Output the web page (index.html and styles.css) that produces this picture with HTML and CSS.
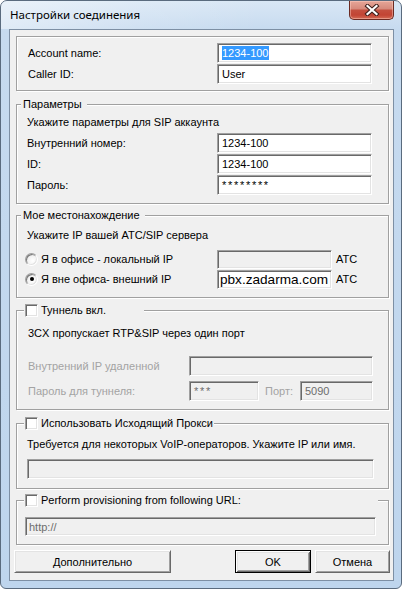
FILE: index.html
```html
<!DOCTYPE html>
<html lang="ru">
<head>
<meta charset="utf-8">
<title>Настройки соединения</title>
<link rel="stylesheet" href="styles.css">
</head>
<body>
<div class="window">
  <div class="titlebar">
    <span class="title">Настройки соединения</span>
    <div class="close">
      <svg width="16" height="12" viewBox="0 0 16 12">
        <path d="M3.5 2 L12.5 10 M12.5 2 L3.5 10" stroke="#3d1f1b" stroke-width="4.2" stroke-linecap="square" fill="none"/>
        <path d="M3.5 2 L12.5 10 M12.5 2 L3.5 10" stroke="#ffffff" stroke-width="2.2" stroke-linecap="square" fill="none"/>
      </svg>
    </div>
  </div>
  <div class="client">
    <div class="group g1">
      <div class="rows">
        <div class="row"><span class="lbl">Account name:</span><span class="field"><span class="sel">1234-100</span></span></div>
        <div class="row"><span class="lbl">Caller ID:</span><span class="field">User</span></div>
      </div>
    </div>

    <div class="group g2">
      <div class="legend text-legend">Параметры</div>
      <div class="desc">Укажите параметры для SIP аккаунта</div>
      <div class="rows">
        <div class="row r10"><span class="lbl l10">Внутренний номер:</span><span class="field">1234-100</span></div>
        <div class="row r10"><span class="lbl l10">ID:</span><span class="field">1234-100</span></div>
        <div class="row r10"><span class="lbl l10">Пароль:</span><span class="field pwd">********</span></div>
      </div>
    </div>

    <div class="group g3">
      <div class="legend text-legend">Мое местонахождение</div>
      <div class="desc">Укажите IP вашей АТС/SIP сервера</div>
      <div class="rows tight">
        <div class="row rr"><span class="radio"></span><span class="rlbl">Я в офисе - локальный IP</span><span class="field ip disabled"></span><span class="atc">АТС</span></div>
        <div class="row rr"><span class="radio"><span class="dot"></span></span><span class="rlbl">Я вне офиса- внешний IP</span><span class="field ip big">pbx.zadarma.com</span><span class="atc">АТС</span></div>
      </div>
    </div>

    <div class="group g4">
      <div class="legend check-legend w4"><span class="check"></span><span>Туннель вкл.</span></div>
      <div class="desc">3CX пропускает RTP&amp;SIP через один порт</div>
      <div class="rows gap5">
        <div class="row"><span class="lbl tl gray">Внутренний IP удаленной</span><span class="field wide disabled"></span></div>
        <div class="row"><span class="lbl tl gray">Пароль для туннеля:</span><span class="field tp disabled gtext pwd">***</span><span class="port gray">Порт:</span><span class="field pt disabled gtext">5090</span></div>
      </div>
    </div>

    <div class="group g5">
      <div class="legend check-legend w5"><span class="check"></span><span>Использовать Исходящий Прокси</span></div>
      <div class="desc">Требуется для некоторых VoIP-операторов. Укажите IP или имя.</div>
      <span class="field full5 disabled"></span>
    </div>

    <div class="group g6">
      <div class="legend check-legend w6"><span class="check"></span><span>Perform provisioning from following URL:</span></div>
      <span class="field full6 disabled gtext">http://</span>
    </div>

    <div class="buttons">
      <div class="btn more">Дополнительно</div>
      <div class="btn ok default">OK</div>
      <div class="btn cancel">Отмена</div>
    </div>
  </div>
</div>
</body>
</html>
```
FILE: styles.css
```css
* { box-sizing: border-box; }
html, body { margin: 0; padding: 0; background: #ffffff; }
body {
  font-family: "Liberation Sans", Arial, sans-serif;
  font-size: 11px;
  color: #000;
}

.window {
  width: 402px;
  height: 589px;
  border: 1px solid #5a6b7e;
  border-radius: 7px 7px 6px 6px;
  background: linear-gradient(180deg, #d9e7f5 0px, #c6daef 30px, #bed5ed 100%);
  display: flex;
  flex-direction: column;
}

.titlebar {
  height: 28px;
  flex: none;
  display: flex;
  justify-content: space-between;
  align-items: flex-start;
  padding: 0 7px 0 9px;
  border-radius: 6px 6px 0 0;
  background: linear-gradient(100deg, rgba(255,255,255,0.45) 0px, rgba(255,255,255,0.15) 140px, rgba(255,255,255,0) 260px);
}

.title {
  font-family: "Noto Sans", "Open Sans", sans-serif;
  font-size: 11.5px;
  line-height: 28px;
  color: #000;
}

.close {
  width: 45px;
  height: 19px;
  border: 1px solid #6b2a22;
  border-top: none;
  border-radius: 0 0 5px 5px;
  background: linear-gradient(180deg, #e6a698 0px, #d6897b 8px, #c4503f 9px, #c24434 14px, #d8755d 19px);
  box-shadow: inset 0 0 0 1px rgba(255,210,200,0.45);
  display: flex;
  align-items: center;
  justify-content: center;
}

.client {
  flex: 1;
  margin: 0 7px 7px 8px;
  border: 1px solid #7d8fa4;
  background: #f0f0f0;
  padding: 6px 3px 0 4px;
}

.group {
  position: relative;
  border: 1px solid #a0a0a0;
  box-shadow: inset 1px 1px 0 #ffffff, 1px 1px 0 #ffffff;
  margin: 0 1px 0 2px;
}

.g1 { padding: 6px 0 6px 0; }
.g2 { margin-top: 13px; padding: 10px 0 8px 0; }
.g3 { margin-top: 11px; padding: 12px 0 8px 0; }
.g4 { margin-top: 12px; padding: 15px 0 8px 0; }
.g5 { margin-top: 13px; padding: 13px 0 9px 0; }
.g6 { margin-top: 11px; padding: 16px 0 8px 0; }

.legend {
  position: absolute;
  top: -8px;
  height: 14px;
  line-height: 14px;
  background: #f0f0f0;
  display: flex;
  align-items: center;
  white-space: nowrap;
}
.text-legend { left: 4px; padding: 0 5px 0 2px; }
.check-legend { left: 7px; padding-left: 1px; }
.w4 { width: 120px; }
.w5 { padding-right: 1px; }
.w6 { width: 354px; }

.check {
  width: 13px;
  height: 13px;
  flex: none;
  margin-right: 3px;
  background: #ffffff;
  border: 1px solid;
  border-color: #a0a0a0 #ffffff #ffffff #a0a0a0;
  box-shadow: inset 1px 1px 0 #696969, inset -1px -1px 0 #e3e3e3;
}

.desc {
  height: 14px;
  line-height: 14px;
  padding-left: 10px;
  white-space: nowrap;
}
.g2 .desc { margin-bottom: 4px; }
.g3 .desc { margin-bottom: 7px; }
.g4 .desc { margin-bottom: 16px; padding-left: 11px; }
.g5 .desc { margin-bottom: 8px; }

.rows { display: flex; flex-direction: column; gap: 1px; }
.rows.tight { gap: 0; }
.rows.gap5 { gap: 5px; }

.row {
  display: flex;
  align-items: center;
  height: 20px;
  padding-left: 11px;
  white-space: nowrap;
}
.row.r10 { padding-left: 10px; }
.row.rr { padding-left: 8px; }

.lbl { width: 189px; flex: none; }
.lbl.l10 { width: 190px; }
.lbl.tl { width: 161px; }

.gray { color: #a3a3a3; }

.field {
  display: flex;
  align-items: center;
  width: 155px;
  height: 20px;
  flex: none;
  padding-left: 4px;
  background: #ffffff;
  border: 1px solid;
  border-color: #a0a0a0 #ffffff #ffffff #a0a0a0;
  box-shadow: inset 1px 1px 0 #696969, inset -1px -1px 0 #e3e3e3;
  overflow: hidden;
  white-space: nowrap;
}
.field.disabled { background: #f0f0f0; }
.gtext { color: #6d6d6d; }

.sel {
  background: #3399ff;
  color: #ffffff;
  line-height: 14px;
  height: 14px;
}

.pwd { letter-spacing: 1.7px; }

.radio {
  width: 13px;
  height: 13px;
  flex: none;
  margin-right: 3px;
  border-radius: 50%;
  border: 1px solid;
  border-color: #a0a0a0 #ffffff #ffffff #a0a0a0;
  background: radial-gradient(circle at 62% 62%, #ffffff 0, #f4f4f4 45%, #d8d8d8 100%);
  box-shadow: inset 1px 1px 0 #7a7a7a, inset -1px -1px 0 #e3e3e3;
  display: flex;
  align-items: center;
  justify-content: center;
}
.dot {
  width: 4px;
  height: 4px;
  border-radius: 50%;
  background: #000;
}
.rlbl { width: 176px; flex: none; }

.field.ip { width: 115px; height: 19px; }
.field.big { font-size: 13.6px; padding-left: 2px; }
.atc { margin-left: 4px; }

.field.wide { width: 184px; }
.field.tp { width: 70px; }
.port { width: 35px; margin-left: 6px; flex: none; }
.field.pt { width: 73px; }

.full5 { width: 347px; margin-left: 10px; }
.full6 { width: 351px; height: 19px; margin-left: 8px; padding-left: 3px; }

.buttons {
  display: flex;
  margin-top: 5px;
}
.btn {
  height: 23px;
  display: flex;
  align-items: center;
  justify-content: center;
  background: #f0f0f0;
  border: 1px solid;
  border-color: #ffffff #696969 #696969 #ffffff;
  box-shadow: inset 1px 1px 0 #e3e3e3, inset -1px -1px 0 #a0a0a0;
}
.btn.more { width: 157px; }
.btn.ok { width: 76px; margin-left: auto; }
.btn.cancel { width: 75px; margin-left: 4px; }
.btn.default {
  border: 1px solid #000;
  box-shadow: inset 1px 1px 0 #ffffff, inset -1px -1px 0 #696969, inset 2px 2px 0 #e3e3e3, inset -2px -2px 0 #a0a0a0;
}
```
